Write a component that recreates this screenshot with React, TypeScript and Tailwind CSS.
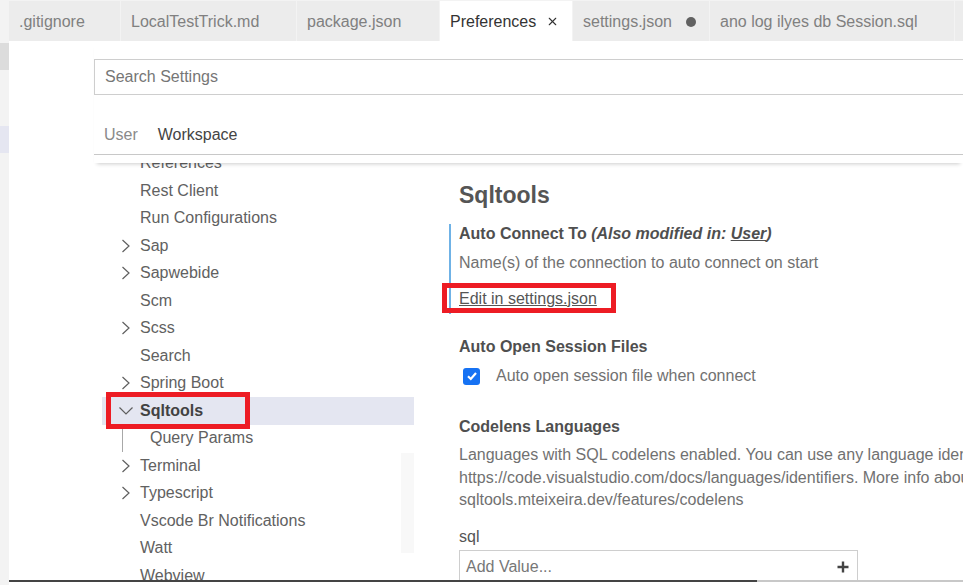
import { X } from 'lucide-react'

type TreeItem = {
  label: string
  chevron?: 'right' | 'down'
  selected?: boolean
  child?: boolean
}

const treeItems: TreeItem[] = [
  { label: 'References' },
  { label: 'Rest Client' },
  { label: 'Run Configurations' },
  { label: 'Sap', chevron: 'right' },
  { label: 'Sapwebide', chevron: 'right' },
  { label: 'Scm' },
  { label: 'Scss', chevron: 'right' },
  { label: 'Search' },
  { label: 'Spring Boot', chevron: 'right' },
  { label: 'Sqltools', chevron: 'down', selected: true },
  { label: 'Query Params', child: true },
  { label: 'Terminal', chevron: 'right' },
  { label: 'Typescript', chevron: 'right' },
  { label: 'Vscode Br Notifications' },
  { label: 'Watt' },
  { label: 'Webview' },
]

const Chevron = ({ dir }: { dir?: 'right' | 'down' }) => {
  if (!dir) {
    return <span className="w-4 shrink-0" />
  }
  return (
    <svg className="h-4 w-4 shrink-0" viewBox="0 0 16 16" fill="none">
      <path
        d={dir === 'right' ? 'M4.5 2L11 8L4.5 14' : 'M1.5 4.5L8 11L14.5 4.5'}
        stroke="#5f5f5f"
        strokeWidth="1.2"
      />
    </svg>
  )
}

const EditorTab = ({
  label,
  width,
  active,
  trailing,
}: {
  label: string
  width: string
  active?: boolean
  trailing?: React.ReactNode
}) => (
  <div
    className={`${width} flex h-full shrink-0 items-center border-r border-[#f3f3f3] pt-[1px] pl-[10px] pr-[14px] ${
      active ? 'bg-white text-[#333]' : 'bg-[#ececec] text-[#808080]'
    }`}
  >
    <span className="whitespace-nowrap">{label}</span>
    {trailing ? <span className="ml-auto flex items-center">{trailing}</span> : null}
  </div>
)

const RedBox = ({ className }: { className: string }) => (
  <div className={`pointer-events-none absolute border-[5px] border-[#ed1c24] ${className}`} />
)

export default function App() {
  return (
    <div className="relative flex h-[585px] w-[963px] overflow-hidden bg-white font-['Liberation_Sans',Arial,sans-serif] text-[16px]">
      {/* activity strip */}
      <div className="flex w-[9px] shrink-0 flex-col bg-[#f3f3f3]">
        <div className="mt-[43px] h-[27px] bg-[#dcdcdc]" />
        <div className="mt-[56px] h-[27px] bg-[#e5e6f1]" />
      </div>

      <div className="flex min-w-0 flex-1 flex-col">
        {/* editor tabs */}
        <div className="flex h-[41px] shrink-0 border-t border-[#f3f3f3] bg-[#ececec]">
          <EditorTab label=".gitignore" width="w-[112px]" />
          <EditorTab label="LocalTestTrick.md" width="w-[176px]" />
          <EditorTab label="package.json" width="w-[143px]" />
          <EditorTab
            label="Preferences"
            width="w-[133px]"
            active
            trailing={<X className="mr-[-1px] h-[13px] w-[13px] text-[#333]" strokeWidth={2} />}
          />
          <EditorTab
            label="settings.json"
            width="w-[137px]"
            trailing={<span className="mr-[-1px] inline-block h-[10px] w-[10px] rounded-full bg-[#616161]" />}
          />
          <EditorTab label="ano log ilyes db Session.sql" width="w-[245px]" />
        </div>

        {/* settings editor */}
        <div className="flex min-h-0 flex-1 flex-col pl-[85px]">
          <div className="relative z-10 shrink-0 bg-white pb-[8px] shadow-[0_4px_4px_-3px_rgba(0,0,0,0.2)]">
            <div className="mt-[18px] flex h-[36px] w-[940px] items-center border border-[#cecece] pl-[10px] text-[#767676]">
              Search Settings
            </div>
            <div className="mt-[20px] flex h-[40px] w-[940px] border-b border-[#c8c8c8]">
              <div className="flex items-center px-[10px] text-[#8a8a8a]">User</div>
              <div className="flex items-center px-[10px] text-[#444]">Workspace</div>
            </div>
          </div>

          <div className="flex min-h-0 flex-1">
            {/* tree */}
            <div className="relative w-[320px] shrink-0 overflow-hidden pl-[8px]">
              <div className="-mt-[13.5px]">
                {treeItems.map((item) =>
                  item.child ? (
                    <div key={item.label} className="flex h-[27.5px] items-stretch pl-[20px] text-[#616161]">
                      <span className="w-px bg-[#a8a8a8]" />
                      <span className="ml-[27px] flex items-center whitespace-nowrap">{item.label}</span>
                    </div>
                  ) : (
                    <div
                      key={item.label}
                      className={`flex h-[27.5px] items-center pl-[16px] ${
                        item.selected ? 'bg-[#e4e6f1] font-bold text-[#424242]' : 'text-[#616161]'
                      }`}
                    >
                      <Chevron dir={item.chevron} />
                      <span className="ml-[6px] whitespace-nowrap">{item.label}</span>
                    </div>
                  ),
                )}
              </div>
              <div className="absolute top-[290px] right-0 h-[100px] w-[13px] bg-[#f8f8f8]" />
            </div>

            {/* settings list */}
            <div className="min-w-0 flex-1 overflow-hidden pl-[35px]">
              <div className="mt-[17px] ml-[10px] text-[23px] leading-[30px] font-bold text-[#555]">Sqltools</div>

              <div className="mt-[14px] border-l-2 border-[#6fb2e6] pb-[5px] pl-[8px]">
                <div className="leading-[20px] font-bold whitespace-nowrap text-[#4f4f4f]">
                  Auto Connect To{' '}
                  <span className="italic">
                    (Also modified in: <span className="underline">User</span>)
                  </span>
                </div>
                <div className="mt-[9px] leading-[20px] whitespace-nowrap text-[#717171]">
                  Name(s) of the connection to auto connect on start
                </div>
                <div className="mt-[16px] leading-[20px] text-[#555] underline">Edit in settings.json</div>
              </div>

              <div className="border-l-2 border-transparent pl-[8px]">
                <div className="mt-[23px] leading-[20px] font-bold text-[#4f4f4f]">Auto Open Session Files</div>
                <div className="mt-[9px] flex h-[20px] items-center">
                  <span className="ml-[4px] flex h-[17px] w-[17px] items-center justify-center rounded-[3px] bg-[#1672f3]">
                    <svg className="h-[12px] w-[12px]" viewBox="0 0 12 12" fill="none">
                      <path d="M2 6.3L4.8 9L10 3" stroke="white" strokeWidth="2.2" />
                    </svg>
                  </span>
                  <span className="ml-[16px] whitespace-nowrap text-[#717171]">Auto open session file when connect</span>
                </div>

                <div className="mt-[31px] leading-[20px] font-bold text-[#4f4f4f]">Codelens Languages</div>
                <div className="mt-[7px] leading-[22.5px] whitespace-nowrap text-[#717171]">
                  <div>Languages with SQL codelens enabled. You can use any language identifier defined on</div>
                  <div>https://code.visualstudio.com/docs/languages/identifiers. More info about codelens: https://vscode-</div>
                  <div>sqltools.mteixeira.dev/features/codelens</div>
                </div>
                <div className="mt-[15px] leading-[20px] text-[#555]">sql</div>
                <div className="mt-[3.5px] flex h-[34px] w-[399px] items-center justify-between border border-[#cecece] pr-[8px] pl-[6px]">
                  <span className="text-[#777]">Add Value...</span>
                  <svg className="h-[12px] w-[12px]" viewBox="0 0 12 12" fill="none">
                    <path d="M6 0.5V11.5M0.5 6H11.5" stroke="#444" strokeWidth="2.4" />
                  </svg>
                </div>
              </div>
            </div>
          </div>
        </div>

        {/* bottom edge */}
        <div className="flex h-[2px] shrink-0">
          <div className="w-[748px] bg-[#444]" />
          <div className="flex-1 bg-[#c8c8c8]" />
        </div>
        <div className="h-[3px] shrink-0 bg-white" />
      </div>

      <RedBox className="top-[116px] left-[145px] h-[40px] w-[115px]" />
      <RedBox className="top-[392px] left-[106px] h-[37px] w-[144px]" />
      <RedBox className="top-[283px] left-[442px] h-[30px] w-[174px]" />
    </div>
  )
}
